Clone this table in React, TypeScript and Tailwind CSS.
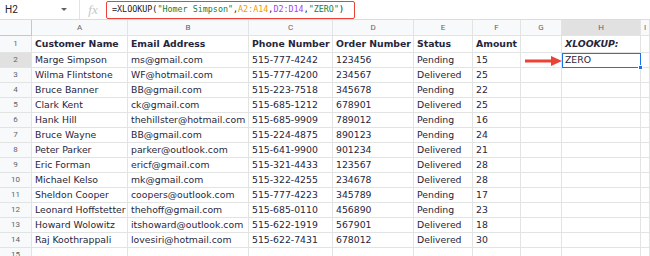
import React from 'react';

const cols = ['A', 'B', 'C', 'D', 'E', 'F', 'G', 'H', 'I'];
const grid = 'grid grid-cols-[32px_96px_121px_84px_81px_59px_48px_41px_79px_1fr]';

const rows: string[][] = [
  ['Marge Simpson', 'ms@gmail.com', '515-777-4242', '123456', 'Pending', '15'],
  ['Wilma Flintstone', 'WF@hotmail.com', '515-777-4200', '234567', 'Delivered', '25'],
  ['Bruce Banner', 'BB@gmail.com', '515-223-7518', '345678', 'Pending', '22'],
  ['Clark Kent', 'ck@gmail.com', '515-685-1212', '678901', 'Delivered', '25'],
  ['Hank Hill', 'thehillster@hotmail.com', '515-685-9909', '789012', 'Pending', '16'],
  ['Bruce Wayne', 'BB@gmail.com', '515-224-4875', '890123', 'Pending', '24'],
  ['Peter Parker', 'parker@outlook.com', '515-641-9900', '901234', 'Delivered', '21'],
  ['Eric Forman', 'ericf@gmail.com', '515-321-4433', '123567', 'Delivered', '28'],
  ['Michael Kelso', 'mk@gmail.com', '515-322-4255', '234678', 'Delivered', '28'],
  ['Sheldon Cooper', 'coopers@outlook.com', '515-777-4223', '345789', 'Pending', '17'],
  ['Leonard Hoffstetter', 'thehoff@gmail.com', '515-685-0110', '456890', 'Pending', '23'],
  ['Howard Wolowitz', 'itshoward@outlook.com', '515-622-1919', '567901', 'Delivered', '18'],
  ['Raj Koothrappali', 'lovesiri@hotmail.com', '515-622-7431', '678012', 'Delivered', '30'],
];

function Cell({ children, className = '' }: { children?: React.ReactNode; className?: string }) {
  return (
    <div className={`border-r border-b border-[#e2e3e3] px-[3px] whitespace-nowrap overflow-hidden leading-none flex items-center ${className}`}>
      {children}
    </div>
  );
}

export default function App() {
  return (
    <div className="w-[650px] h-[256px] overflow-hidden bg-white text-[#26263c] font-['DejaVu_Sans',Verdana,sans-serif]">
      {/* formula bar */}
      <div className="h-[20px] flex items-center border-b border-[#dadce0] relative">
        <div className="w-[80px] h-full flex items-center justify-between pl-[5px] pr-[12px] border-r border-[#e2e3e3] text-[10px] text-[#202124] font-['Roboto',sans-serif]">
          <span>H2</span>
          <span className="w-0 h-0 border-l-[3px] border-r-[3px] border-t-[3px] border-l-transparent border-r-transparent border-t-[#5f6368]" />
        </div>
        <div className="w-[26px] text-center text-[13px] italic text-[#c4c7c5] font-['Liberation_Serif',serif]">fx</div>
        <div className="h-[18px] w-[249px] border-[1.5px] border-[#ea4335] rounded-[2px] flex items-center pl-[5px] text-[8.4px] font-['DejaVu_Sans_Mono',monospace] whitespace-nowrap text-[#202124]">
          =XLOOKUP(<span className="text-[#188038]">"Homer Simpson"</span>,<span className="text-[#f29900]">A2:A14</span>,<span className="text-[#a142f4]">D2:D14</span>,<span className="text-[#188038]">"ZERO"</span>)
        </div>
      </div>

      {/* column headers */}
      <div className={`${grid} h-[16px] bg-[#f8f9fa] text-[8px] text-[#5f6368] font-['Roboto',sans-serif]`}>
        <div className="border-r border-b border-[#c7c7c7]" />
        {cols.map((c) => (
          <div
            key={c}
            className={`border-r border-b border-[#e2e3e3] flex items-center justify-center ${c === 'H' ? 'bg-[#e1e1e1]' : ''}`}
          >
            {c}
          </div>
        ))}
      </div>

      {/* row 1 */}
      <div className={`${grid} h-[16.5px] text-[9.3px] font-bold`}>
        <Cell className="bg-[#f8f9fa] justify-center text-[8px] font-normal text-[#5f6368] font-['Roboto',sans-serif]">1</Cell>
        <Cell>Customer Name</Cell>
        <Cell>Email Address</Cell>
        <Cell>Phone Number</Cell>
        <Cell>Order Number</Cell>
        <Cell>Status</Cell>
        <Cell>Amount</Cell>
        <Cell />
        <Cell className="italic">XLOOKUP:</Cell>
        <Cell />
      </div>

      {rows.map((r, i) => (
        <div key={i} className={`${grid} h-[15px] text-[9.3px]`}>
          <Cell
            className={`justify-center text-[8px] text-[#5f6368] font-['Roboto',sans-serif] ${i === 0 ? 'bg-[#e1e1e1]' : 'bg-[#f8f9fa]'}`}
          >
            {i + 2}
          </Cell>
          {r.map((v, j) => (
            <Cell key={j}>{v}</Cell>
          ))}
          <Cell className="relative overflow-visible">
            {i === 0 && (
              <svg className="absolute left-[4px] top-[3px]" width="38" height="10" viewBox="0 0 38 10">
                <line x1="0" y1="5" x2="28" y2="5" stroke="#ea4335" strokeWidth="3" strokeLinecap="round" />
                <polygon points="26,0 37,5 26,10" fill="#ea4335" />
              </svg>
            )}
          </Cell>
          {i === 0 ? (
            <div className="relative border-[1.5px] border-[#1a73e8] px-[2px] flex items-center leading-none">
              ZERO
              <span className="absolute right-[-3px] bottom-[-3px] w-[5px] h-[5px] bg-[#1a73e8] border border-white" />
            </div>
          ) : (
            <Cell />
          )}
          <Cell />
        </div>
      ))}

      <div className={`${grid} h-[15px]`}>
        <Cell className="bg-[#f8f9fa] justify-center text-[8px] text-[#5f6368] font-['Roboto',sans-serif]">15</Cell>
        {cols.map((c) => (
          <Cell key={c} />
        ))}
      </div>
    </div>
  );
}
